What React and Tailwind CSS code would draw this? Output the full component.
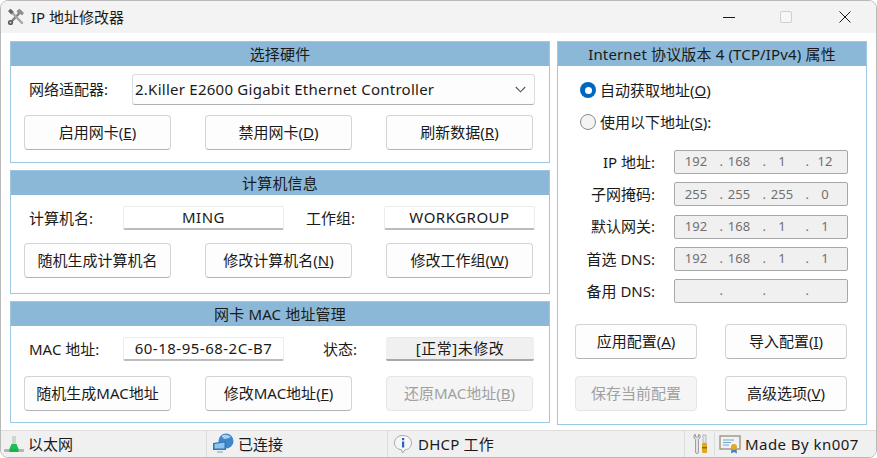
import React from 'react';

const Btn = ({ label, hot, disabled, w = 'w-[147px]' }) => (
  <div
    className={`${w} h-[35px] flex items-center justify-center rounded-[4px] border text-[15px] ${
      disabled
        ? 'bg-[#f5f5f5] border-[#e6e6e6] text-[#a0a0a0]'
        : 'bg-[#fdfdfd] border-[#d4d4d4] border-b-[#b4b4b4] text-[#1a1a1a]'
    }`}
  >
    {label}
    {hot && (
      <span>
        (<u>{hot}</u>)
      </span>
    )}
  </div>
);

const Panel = ({ title, className = '', children }) => (
  <div className={`border border-[#9ec8e2] flex flex-col ${className}`}>
    <div className="h-[24px] shrink-0 bg-[#8bb8d6] flex items-center justify-center text-[15px] tracking-[0.15px] text-[#1a1a1a]">
      {title}
    </div>
    {children}
  </div>
);

const ReadField = ({ value, w, gray }) => (
  <div
    className={`${w} h-[24px] flex items-center justify-center text-[15px] tracking-[0.5px] text-[#1a1a1a] border-b-2 rounded-[2px] ${
      gray ? 'bg-[#f0f0f0] border-b-[#a8a8a8] border-t border-t-[#e8e8e8]' : 'bg-white border-b-[#bcbcbc] border-t border-x border-[#ececec]'
    }`}
  >
    {value}
  </div>
);

const IpField = ({ label, parts }) => (
  <div className="flex items-center h-[24px]">
    <div className="w-[79px] text-right text-[15px] text-[#1a1a1a] whitespace-nowrap">{label}</div>
    <div className="ml-[19px] w-[174px] h-[24px] flex items-center pl-[9px] bg-[#f0f0f0] border border-[#a8a8a8] rounded-[2px] text-[13px] text-[#707070]">
      {parts.map((p, i) => (
        <React.Fragment key={i}>
          <span className="w-[24px] text-center shrink-0">{p}</span>
          {i < 3 && <span className="w-[19px] text-right pr-[4px] shrink-0">.</span>}
        </React.Fragment>
      ))}
    </div>
  </div>
);

const Radio = ({ checked, label, hot, colon }) => (
  <div className="flex items-center gap-[4px] h-[20px] text-[15px] text-[#1a1a1a]">
    {checked ? (
      <span className="w-[16px] h-[16px] rounded-full bg-[#0067c0] flex items-center justify-center">
        <span className="w-[7px] h-[7px] rounded-full bg-white" />
      </span>
    ) : (
      <span className="w-[16px] h-[16px] rounded-full border border-[#8a8a8a] bg-[#f4f4f4]" />
    )}
    <span>
      {label}(<u>{hot}</u>){colon}
    </span>
  </div>
);

const ToolsIcon = () => (
  <svg width="18" height="18" viewBox="0 0 18 18">
    <path d="M3.5 14.5 L13 4.5" stroke="#7d7d7d" strokeWidth="2.4" strokeLinecap="round" />
    <path d="M9.5 3 L12.5 0.8 L17 5 L15 7.5 L13 5.5 L11 5.5z" fill="#8f8f8f" />
    <path d="M4.5 4 L15 15" stroke="#a6a6a6" strokeWidth="2.4" strokeLinecap="round" />
    <path d="M1 3 L3.5 0.8 L6.8 3.8 L4.2 6.4z" fill="#666" />
    <circle cx="3.5" cy="14.5" r="2.6" fill="#5c5c5c" />
    <circle cx="3.5" cy="14.5" r="0.9" fill="#d8d8d8" />
  </svg>
);

const EthernetIcon = () => (
  <svg width="22" height="18" viewBox="0 0 22 18">
    <rect x="9" y="1" width="4" height="9" fill="#cfd6cf" />
    <path d="M6 15 L8.5 9 H13.5 L16 15z" fill="#1fbf55" />
    <rect x="1" y="14" width="20" height="3" rx="1" fill="#aeb7b7" />
    <rect x="6.5" y="14" width="9" height="3" fill="#16b34c" />
  </svg>
);

const NetworkIcon = () => (
  <svg width="22" height="24" viewBox="0 0 22 24">
    <circle cx="14" cy="9" r="7.5" fill="#3f87c9" />
    <path d="M9.5 4 Q14 1 19 5 Q15 7 12 7z" fill="#a6d3ef" />
    <path d="M1 11 L14 9 V18 H1z" fill="#2f78bd" />
    <path d="M2.5 12 L12.5 10.6 V16.5 H2.5z" fill="#8cc6ec" />
    <rect x="5" y="19" width="6" height="2" fill="#b7c6d2" />
  </svg>
);

const InfoIcon = () => (
  <svg width="20" height="20" viewBox="0 0 20 20">
    <path d="M10 1.5 C15 1.5 18.5 4.5 18.5 9 C18.5 13 15.5 15.5 12 15.8 L9.5 19 L8.6 15.8 C4.5 15.3 1.5 13 1.5 9 C1.5 4.5 5 1.5 10 1.5z" fill="#f6f6f6" stroke="#a9a9a9" />
    <rect x="9" y="7.5" width="2.2" height="6" fill="#2a62b8" />
    <rect x="9" y="4" width="2.2" height="2.2" fill="#2a62b8" />
  </svg>
);

const WrenchIcon = () => (
  <svg width="16" height="22" viewBox="0 0 16 22">
    <path d="M2 2 V5 L3.5 6.5 V19 A1.5 1.5 0 0 0 6.5 19 V6.5 L8 5 V2 L6.5 1.5 V4 H3.5 V1.5z" fill="#e3e3e3" stroke="#8c8c8c" strokeWidth="0.8" />
    <rect x="11" y="2" width="3" height="8" fill="#e6e6e6" stroke="#9a9a9a" strokeWidth="0.6" />
    <rect x="10" y="10" width="5" height="10" rx="1" fill="#e0a81c" />
    <rect x="10" y="14" width="5" height="1.4" fill="#8a6510" />
  </svg>
);

const CertIcon = () => (
  <svg width="22" height="20" viewBox="0 0 22 20">
    <rect x="1" y="2" width="20" height="13" fill="#eef3f7" stroke="#a3927a" strokeWidth="1.4" />
    <path d="M4 6 H15 M4 8.5 H12 M4 11 H10" stroke="#7aa6cc" strokeWidth="1" />
    <path d="M12.5 15 L12 19.5 L15 18 L18 19.5 L17.5 15z" fill="#3f83c4" />
    <circle cx="15" cy="13" r="3" fill="#e3a91f" />
  </svg>
);

const StatusCell = ({ className, children }) => (
  <div className={`flex items-center h-full border-r border-[#dcdcdc] ${className}`}>{children}</div>
);

export default function App() {
  return (
    <div
      className="w-[877px] h-[458px] flex flex-col overflow-hidden rounded-[8px] border border-[#b9b9b9] bg-white text-[#1a1a1a]"
      style={{ fontFamily: '"Noto Sans", "Noto Sans CJK SC", sans-serif' }}
    >
      {/* title bar */}
      <div className="h-[32px] shrink-0 bg-[#f3f3f3] flex items-center pl-[6px]">
        <ToolsIcon />
        <span className="ml-[6px] text-[15px] text-[#1a1a1a]">IP 地址修改器</span>
        <div className="ml-auto flex items-center">
          <div className="w-[12px] h-px bg-[#1a1a1a]" />
          <div className="ml-[45px] w-[12px] h-[12px] border border-[#cfcfcf] rounded-[2px] bg-[#f7f7f7]" />
          <svg className="ml-[47px] mr-[25px]" width="12" height="12" viewBox="0 0 12 12">
            <path d="M0.5 0.5 L11.5 11.5 M11.5 0.5 L0.5 11.5" stroke="#1a1a1a" strokeWidth="1" />
          </svg>
        </div>
      </div>

      {/* body */}
      <div className="flex-1 flex gap-[7px] pl-[9px] pt-[8px] pb-[5px]">
        <div className="w-[540px] flex flex-col gap-[7px]">
          <Panel title="选择硬件" className="h-[122px]">
            <div className="flex items-center h-[31px] mt-[8px] pl-[18px] text-[15px]">
              <span className="w-[103px]">网络适配器:</span>
              <div className="w-[403px] h-[31px] flex items-center justify-between pl-[2px] pr-[8px] bg-[#fdfdfd] border border-[#dcdcdc] border-b-[#b0b0b0] rounded-[3px] text-[15px] tracking-[0.25px]">
                2.Killer E2600 Gigabit Ethernet Controller
                <svg width="11" height="7" viewBox="0 0 11 7">
                  <path d="M0.8 1 L5.5 5.8 L10.2 1" fill="none" stroke="#555" strokeWidth="1.1" />
                </svg>
              </div>
            </div>
            <div className="flex gap-[34px] mt-[10px] pl-[13px]">
              <Btn label="启用网卡" hot="E" />
              <Btn label="禁用网卡" hot="D" />
              <Btn label="刷新数据" hot="R" />
            </div>
          </Panel>

          <Panel title="计算机信息" className="h-[124px]">
            <div className="flex items-center h-[24px] mt-[11px] pl-[18px] text-[15px]">
              <span className="w-[94px]">计算机名:</span>
              <ReadField value="MING" w="w-[161px]" />
              <span className="ml-[22px] w-[78px]">工作组:</span>
              <ReadField value="WORKGROUP" w="w-[151px]" />
            </div>
            <div className="flex gap-[34px] mt-[13px] pl-[13px]">
              <Btn label="随机生成计算机名" />
              <Btn label="修改计算机名" hot="N" />
              <Btn label="修改工作组" hot="W" />
            </div>
          </Panel>

          <Panel title="网卡 MAC 地址管理" className="h-[122px]">
            <div className="flex items-center h-[24px] mt-[11px] pl-[18px] text-[15px]">
              <span className="w-[94px]">MAC 地址:</span>
              <ReadField value="60-18-95-68-2C-B7" w="w-[161px]" />
              <span className="ml-[39px] w-[63px]">状态:</span>
              <ReadField value="[正常]未修改" w="w-[148px]" gray />
            </div>
            <div className="flex gap-[34px] mt-[15px] pl-[13px]">
              <Btn label="随机生成MAC地址" />
              <Btn label="修改MAC地址" hot="F" />
              <Btn label="还原MAC地址" hot="B" disabled />
            </div>
          </Panel>
        </div>

        <Panel title="Internet 协议版本 4 (TCP/IPv4) 属性" className="w-[310px]">
          <div className="flex flex-col gap-[12px] pl-[22px] pt-[14px]">
            <Radio checked label="自动获取地址" hot="O" />
            <Radio label="使用以下地址" hot="S" colon=":" />
          </div>
          <div className="flex flex-col gap-[8.3px] mt-[18px] pl-[18px]">
            <IpField label="IP 地址:" parts={['192', '168', '1', '12']} />
            <IpField label="子网掩码:" parts={['255', '255', '255', '0']} />
            <IpField label="默认网关:" parts={['192', '168', '1', '1']} />
            <IpField label="首选 DNS:" parts={['192', '168', '1', '1']} />
            <IpField label="备用 DNS:" parts={['', '', '', '']} />
          </div>
          <div className="grid grid-cols-[122px_122px] gap-x-[28px] gap-y-[17px] mt-[21px] pl-[17px]">
            <Btn label="应用配置" hot="A" w="w-[122px]" />
            <Btn label="导入配置" hot="I" w="w-[122px]" />
            <Btn label="保存当前配置" disabled w="w-[122px]" />
            <Btn label="高级选项" hot="V" w="w-[122px]" />
          </div>
        </Panel>
      </div>

      {/* status bar */}
      <div className="h-[27px] shrink-0 bg-[#f0f0f0] border-t border-[#dddddd] flex items-center text-[15px]">
        <StatusCell className="w-[206px] pl-[2px] gap-[3px]">
          <EthernetIcon />
          <span>以太网</span>
        </StatusCell>
        <StatusCell className="w-[181px] pl-[5px] gap-[4px]">
          <NetworkIcon />
          <span>已连接</span>
        </StatusCell>
        <StatusCell className="w-[297px] pl-[5px] gap-[5px]">
          <InfoIcon />
          <span className="tracking-[0.2px]">DHCP 工作</span>
        </StatusCell>
        <StatusCell className="w-[30px] justify-center">
          <WrenchIcon />
        </StatusCell>
        <div className="flex items-center pl-[4px] gap-[4px]">
          <CertIcon />
          <span className="text-[15px] tracking-[0.45px]">Made By kn007</span>
        </div>
      </div>
    </div>
  );
}
